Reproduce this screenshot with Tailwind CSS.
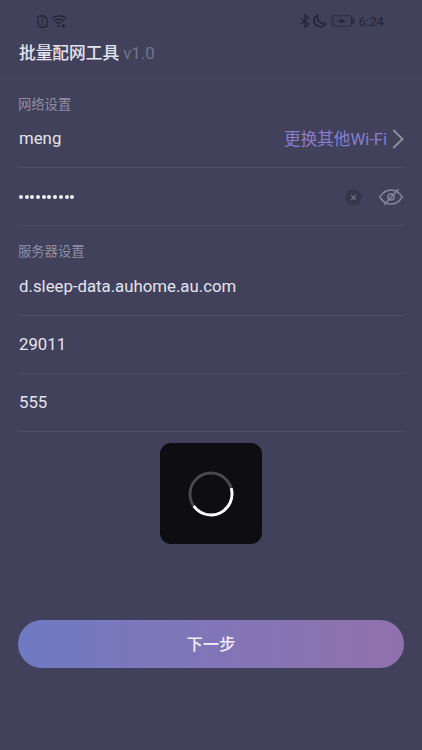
<!DOCTYPE html>
<html lang="zh-CN">
<head>
    <meta charset="UTF-8">
    <meta name="viewport" content="width=device-width, initial-scale=1.0">
    <title>批量配网工具</title>
    <script src="https://cdn.jsdelivr.net/npm/@tailwindcss/browser@4"></script>
</head>
<body class="bg-[#41415b] font-['Roboto','Noto_Sans_CJK_SC',sans-serif] text-[#e4e4ee]">
    <div class="relative flex h-[750px] w-full flex-col overflow-hidden">
        <!-- Status bar -->
        <div class="flex h-[42px] shrink-0 items-center justify-between pr-[38px] pl-[37px] text-[#252536]">
            <div class="flex items-center gap-[3px]">
                <svg class="h-[13px] w-[11px]" viewBox="0 0 11 13" fill="none" stroke="currentColor" stroke-width="1.3">
                    <path d="M1 3a2 2 0 0 1 2-2h4.2L10 3.6V10a2 2 0 0 1-2 2H3a2 2 0 0 1-2-2z"/>
                    <path d="M5.5 3.6v3.8M5.5 8.6v1.3"/>
                </svg>
                <svg class="h-[14px] w-[16px]" viewBox="0 0 16 14" fill="none" stroke="currentColor" stroke-width="1.5">
                    <path d="M.8 4.6a10.5 10.5 0 0 1 14.4 0M3 7.2a7.4 7.4 0 0 1 10 0M5.2 9.6a4.2 4.2 0 0 1 5 -.4"/>
                    <path d="M6.300 12h2.400M10.800 11.800h3.400M12.500 10.200v3.200" stroke-width="1.500"/>
                </svg>
            </div>
            <div class="flex items-center">
                <svg class="h-[14px] w-[10px]" viewBox="0 0 10 14" fill="none" stroke="currentColor" stroke-width="1.3">
                    <path d="M1 4l7.5 6L5 13V1l3.5 3L1 10"/>
                </svg>
                <svg class="ml-[3px] h-[14px] w-[14px]" viewBox="0 0 14 14" fill="none" stroke="currentColor" stroke-width="1.700" stroke-linejoin="round">
                    <path d="M4.600 1.200C.4 3 0 8.400 3.200 11.200 6.400 13.800 11 12.800 12.800 9.600 7.800 10.400 3.600 6.800 4.600 1.200z"/>
                </svg>
                <svg class="ml-[4px] h-[12px] w-[24px]" viewBox="0 0 24 12" fill="none" stroke="currentColor">
                    <rect x="1" y=".8" width="19.500" height="10.400" rx="2" stroke-width="1.100" opacity=".75"/>
                    <path d="M2.800 2v8" stroke-width="1" opacity=".5"/>
                    <path d="M22.400 3.200v5.600" stroke-width="1.800"/>
                    <path d="M6.500 6l3.200-.7L11 3.800l.7 1.500 3.200.7-3.200.7-.7 1.500-1.300-1.500z" fill="currentColor" stroke="currentColor" stroke-width=".4"/>
                </svg>
                <span class="mt-px ml-[4px] text-[13.200px] leading-none">6:24</span>
            </div>
        </div>

        <!-- Title -->
        <header class="flex h-[37px] shrink-0 items-start border-b border-[#4a4964] pr-[18px] pl-[19px]">
            <h1 class="text-[16.700px] leading-[23px] font-medium">批量配网工具 <span class="font-normal text-[#777589]">v1.0</span></h1>
        </header>

        <!-- Network -->
        <section class="px-[18px]">
            <h2 class="h-[31px] pt-[15px] text-[13.300px] leading-[21px] text-[#908fa3]">网络设置</h2>
            <div class="flex h-[58px] items-center justify-between border-b border-[#504f69]">
                <span class="pt-px pl-px text-[16.800px]">meng</span>
                <a class="flex items-center pt-px text-[16.600px] text-[#8a7dce]">
                    <span class="pt-[3px]">更换其他Wi-Fi</span>
                    <svg class="ml-[5px] h-[20px] w-[12px]" viewBox="0 0 12 20" fill="none" stroke="#908fa0" stroke-width="1.800">
                        <path d="M1.300 1l9.200 9-9.200 9"/>
                    </svg>
                </a>
            </div>
            <div class="flex h-[58px] items-center justify-between border-b border-[#504f69]">
                <div class="flex gap-[1.700px] pl-px">
                    <i class="size-[4px] rounded-full bg-[#f0f0f6]"></i>
                    <i class="size-[4px] rounded-full bg-[#f0f0f6]"></i>
                    <i class="size-[4px] rounded-full bg-[#f0f0f6]"></i>
                    <i class="size-[4px] rounded-full bg-[#f0f0f6]"></i>
                    <i class="size-[4px] rounded-full bg-[#f0f0f6]"></i>
                    <i class="size-[4px] rounded-full bg-[#f0f0f6]"></i>
                    <i class="size-[4px] rounded-full bg-[#f0f0f6]"></i>
                    <i class="size-[4px] rounded-full bg-[#f0f0f6]"></i>
                    <i class="size-[4px] rounded-full bg-[#f0f0f6]"></i>
                    <i class="size-[4px] rounded-full bg-[#f0f0f6]"></i>
                </div>
                <div class="flex items-center pt-px">
                    <svg class="size-[17px]" viewBox="0 0 17 17">
                        <circle cx="8.500" cy="8.500" r="8.300" fill="#36364c"/>
                        <path d="M6.200 6.200l4.600 4.600M10.800 6.200l-4.600 4.600" stroke="#77768a" stroke-width="1.200"/>
                    </svg>
                    <svg class="mr-px ml-[17px] h-[18px] w-[24px]" viewBox="0 0 24 18" fill="none" stroke="#85849a" stroke-width="1.500">
                        <path d="M.8 9C3.500 4.500 7.500 1.900 12 1.900S20.500 4.500 23.200 9C20.500 13.500 16.500 16.100 12 16.100S3.500 13.500.8 9z"/>
                        <circle cx="12" cy="9" r="3"/>
                        <path d="M19.500 1L5 17"/>
                    </svg>
                </div>
            </div>
        </section>

        <!-- Server -->
        <section class="px-[18px]">
            <h2 class="h-[32px] pt-[15px] text-[13.300px] leading-[21px] text-[#908fa3]">服务器设置</h2>
            <div class="flex h-[58px] items-center border-b border-[#504f69] pl-px text-[16.800px]">d.sleep-data.auhome.au.com</div>
            <div class="flex h-[58px] items-center border-b border-[#504f69] pl-px text-[16.800px]">29011</div>
            <div class="flex h-[58px] items-center border-b border-[#504f69] pl-px text-[16.800px]">555</div>
        </section>

        <button class="mx-[18px] mt-auto mb-[82px] h-[48px] shrink-0 rounded-full bg-linear-to-r from-[#6f7ac2] to-[#9070ac] pt-[3px] text-[16.300px] font-medium text-[#f0eef8]">下一步</button>

        <!-- Loading overlay -->
        <div class="absolute top-[443px] left-[160px] flex h-[101px] w-[102px] items-center justify-center rounded-[11px] bg-[#0e0d12]">
            <svg class="size-[46px]" viewBox="0 0 46 46" fill="none" stroke-width="2.800">
                <circle cx="23" cy="23" r="21" stroke="#4b4b4e"/>
                <path d="M43.200 17.200A21 21 0 0 1 5.800 35" stroke="#fff"/>
            </svg>
        </div>
    </div>
</body>
</html>
